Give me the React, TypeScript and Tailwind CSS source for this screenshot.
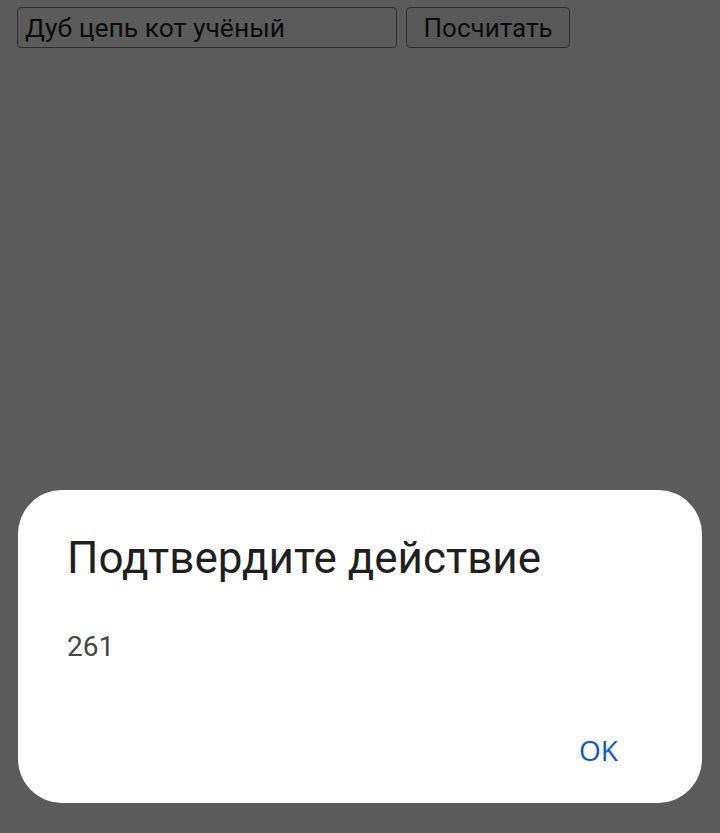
import React from 'react';

const font = { fontFamily: 'Roboto, "Noto Sans", sans-serif' };

const App: React.FC = () => {
    return (
        <div className="relative w-[720px] h-[833px] bg-[#5b5b5b] overflow-hidden" style={font}>
            {/* Page form (dimmed by the scrim) */}
            <div className="flex items-start gap-[9px] pl-[17px] pt-[7px]">
                <div className="w-[380px] h-[41px] border-[1.5px] border-[#2e2e2e] rounded-[4px] flex items-center pl-[7px] pt-[1px]">
                    <span className="text-[26.5px] leading-none text-[#0c0c0c]">Дуб цепь кот учёный</span>
                </div>
                <div className="w-[164px] h-[41px] border-[1.5px] border-[#2e2e2e] rounded-[4px] bg-[#585858] flex items-center justify-center pt-[1px]">
                    <span className="text-[26px] leading-none text-[#0c0c0c]">Посчитать</span>
                </div>
            </div>

            {/* Alert dialog */}
            <div className="absolute left-[18px] right-[18px] bottom-[30px] h-[313px] bg-white rounded-[44px] flex flex-col px-[49px] pt-[46px]">
                <h2 className="text-[44px] leading-none text-[#1f1f1f]">Подтвердите действие</h2>
                <p className="mt-[53px] text-[28px] leading-none text-[#444746]">261</p>
                <div className="mt-auto mb-[39px] flex justify-end pr-[35px]">
                    <button className="text-[28px] leading-none text-[#0b57d0]" style={{ fontFamily: '"Open Sans", sans-serif' }}>OK</button>
                </div>
            </div>
        </div>
    );
};

export default App;
